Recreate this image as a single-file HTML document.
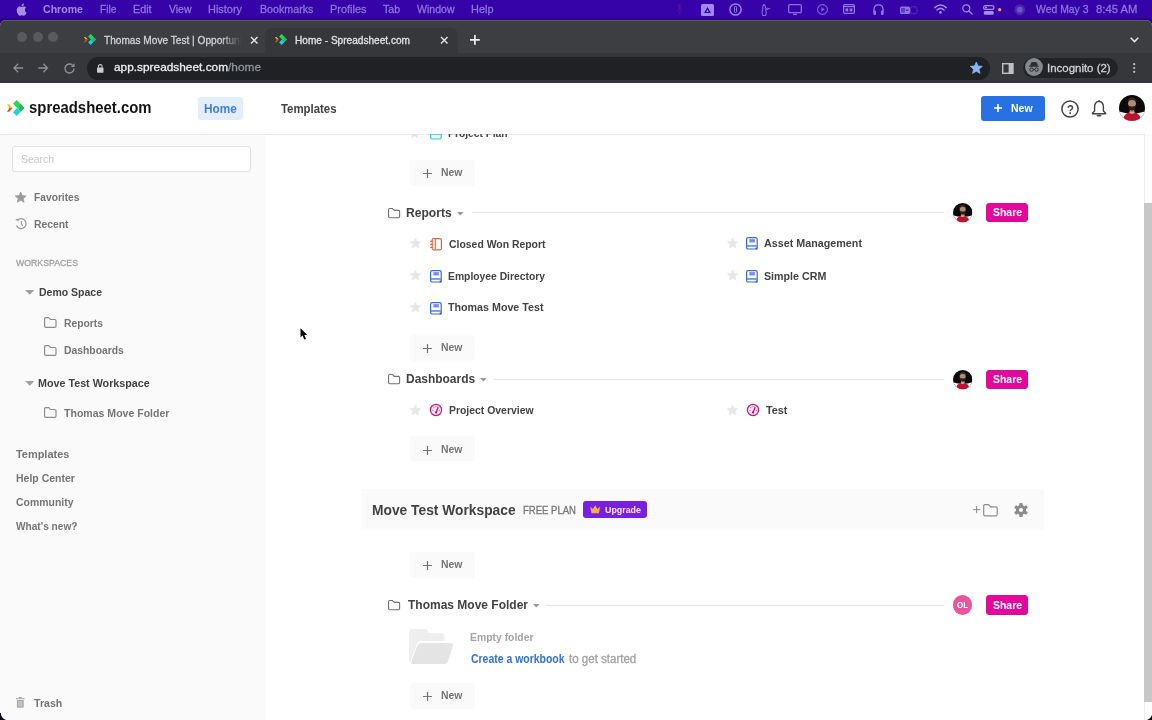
<!DOCTYPE html>
<html lang="en">
<head>
<meta charset="utf-8">
<title>Home - Spreadsheet.com</title>
<style>
*{box-sizing:border-box;margin:0;padding:0}
html,body{width:1152px;height:720px;overflow:hidden;background:#0b0b12}
body{position:relative;font-family:"Liberation Sans",sans-serif;-webkit-font-smoothing:antialiased}
.a{position:absolute}
.t{position:absolute;white-space:nowrap;line-height:20px;height:20px;transform-origin:0 50%}
svg{position:absolute;overflow:visible}
#menubar{left:0;top:0;width:1152px;height:30px;background:linear-gradient(#3503a8 0,#3503a8 17px,#2a0382 20px,#2a0382 100%)}
#win{left:0;top:20px;width:1152px;height:700px;border-radius:6px 6px 8px 8px;overflow:hidden;background:#fff}
#tabstrip{left:0;top:0;width:1152px;height:33px;background:#3c3e42;border-top:1px solid #57595d}
#toolbar{left:0;top:33px;width:1152px;height:30px;background:#36373b}
#acttab{left:265px;top:7.5px;width:193px;height:26.5px;background:#36373b;border-radius:7px 7px 0 0}
.tl{width:10px;height:10px;border-radius:50%;background:#585a5e;top:12.4px}
#omni{left:87px;top:37px;width:903px;height:22.8px;border-radius:11.4px;background:#202124}
#incog{left:1023px;top:38.5px;width:95px;height:19.5px;border-radius:10px;background:#222327}
#apphead{left:0;top:63px;width:1152px;height:52px;background:#fff;border-bottom:1px solid #e8e8e8}
#sidebar{left:0;top:114px;width:264px;height:586px;background:#fafafa;box-shadow:1px 0 3px rgba(0,0,0,.04)}
#search{left:12px;top:146.2px;width:239.3px;height:25.6px;background:#fff;border:1px solid #e0e0e0;border-radius:3px}
.newb{left:410px;width:65px;height:26.2px;background:#fafafa;border-radius:3px}
.line{height:1px;background:#e2e2e2}
.share{left:986.2px;width:41.6px;height:19.2px;background:#e3089b;border:1px solid #cf1290;border-radius:3px}
#banner{left:362px;top:489.2px;width:682px;height:39.4px;background:#fafafa}
#upg{left:583.2px;top:501.3px;width:63.8px;height:17.2px;background:#7721dd;border-radius:3px}
#sbtrack{left:1144px;top:134px;width:8px;height:586px;background:#fcfcfc;border-left:1px solid #ececec}
#sbthumb{left:1144.3px;top:202.5px;width:7.7px;height:499.2px;background:#c7c7c7}
</style>
</head>
<body>
<div id="menubar" class="a"></div>
<div id="win" class="a">
  <div id="tabstrip" class="a"></div>
  <div id="acttab" class="a"></div>
  <div id="toolbar" class="a"></div>
  <div class="a tl" style="left:16.5px"></div>
  <div class="a tl" style="left:32.5px"></div>
  <div class="a tl" style="left:48.3px"></div>
</div>
<div id="omni" class="a" style="top:56.8px"></div>
<div id="incog" class="a" style="top:57.7px;height:20px"></div>
<div id="apphead" class="a" style="top:82.5px"></div>
<div id="sidebar" class="a" style="top:134.5px"></div>
<div id="search" class="a"></div>
<div class="a" style="left:198px;top:96.5px;width:44.8px;height:23.5px;background:#e4edfb;border-radius:3px"></div>
<div class="a" style="left:980.6px;top:95.7px;width:64.8px;height:25px;background:#2871e3;border-radius:3px"></div>

<!-- main -->
<div class="a newb" style="top:159.7px"></div>
<div class="a newb" style="top:334.5px"></div>
<div class="a newb" style="top:436.2px"></div>
<div class="a newb" style="top:551.8px"></div>
<div class="a newb" style="top:683.2px"></div>
<div class="a line" style="left:472px;top:212.3px;width:472px"></div>
<div class="a line" style="left:493.7px;top:378.7px;width:450.3px"></div>
<div class="a line" style="left:546px;top:604.5px;width:398px"></div>
<div class="a share" style="top:203.1px"></div>
<div class="a share" style="top:369.6px"></div>
<div class="a share" style="top:595.4px"></div>
<div id="banner" class="a"></div>
<div id="upg" class="a"></div>
<div class="a" style="left:953.1px;top:595.4px;width:19.4px;height:19.4px;border-radius:50%;background:#e9559c"></div>
<div id="sbtrack" class="a"></div>
<div id="sbthumb" class="a"></div>

<svg style="left:16.0px;top:3.2px" width="11" height="13" viewBox="0 0 11 13" ><path d="M8.9,6.9c0-1.5,1.2-2.2,1.3-2.3c-0.7-1-1.8-1.2-2.2-1.2c-0.9-0.1-1.8,0.6-2.3,0.6c-0.5,0-1.2-0.5-2-0.5C2.700,3.500,1.700,4.100,1.200,5C0.100,6.900,0.900,9.700,2,11.200c0.500,0.800,1.100,1.600,1.900,1.600c0.800,0,1.100-0.500,2-0.500s1.200,0.500,2,0.500c0.800,0,1.400-0.800,1.900-1.500c0.600-0.900,0.800-1.700,0.900-1.800C10.600,9.500,8.900,8.800,8.900,6.900z M7.400,2.400C7.800,1.900,8.100,1.200,8,0.500C7.400,0.500,6.700,0.900,6.200,1.400C5.800,1.900,5.500,2.600,5.600,3.300C6.300,3.300,7,2.900,7.400,2.400z" fill="#a68ee6"/></svg>
<svg style="left:676.5px;top:4.0px" width="5" height="11" viewBox="0 0 5 11" ><rect x="1.2" y="0" width="2.6" height="6.5" rx="1.3" fill="#4c1296"/><path d="M0.3,5 Q0.3,8 2.5,8 Q4.7,8 4.700,5 M2.5,8 V10.5" stroke="#4c1296" stroke-width="0.9" fill="none"/></svg>
<svg style="left:700.6px;top:3.7px" width="13" height="12" viewBox="0 0 13 12" ><rect width="13" height="12" rx="1.5" fill="#a088ec"/><path d="M6.5,3 L10,9 H3 Z" fill="#3503a8"/><path d="M6.5,5.600 L7.800,8 H5.200 Z" fill="#a088ec"/></svg>
<svg style="left:728.7px;top:3.2px" width="13" height="13" viewBox="0 0 13 13" ><circle cx="6.5" cy="6.5" r="5.600" fill="none" stroke="#9a80e6" stroke-width="1.5"/><rect x="5.400" y="3.400" width="2.200" height="6.200" rx="1.100" fill="none" stroke="#9a80e6" stroke-width="1"/></svg>
<svg style="left:760.4px;top:3.5px" width="10" height="12" viewBox="0 0 10 12" ><path d="M4,0.500 Q6,1.500 5.200,4 L9,4.500 L5.500,6 Q7,9 5.500,11.500 L3,11.500 Q1,8 3,5 Q2,2.500 4,0.500 Z" fill="none" stroke="#8669dc" stroke-width="1.100"/></svg>
<svg style="left:788.0px;top:4.2px" width="14" height="11" viewBox="0 0 14 11" ><rect x="0.700" y="0.700" width="12.600" height="8" rx="1.200" fill="none" stroke="#8a6ee0" stroke-width="1.300"/><path d="M5,10.400 H9" stroke="#8a6ee0" stroke-width="1.300"/></svg>
<svg style="left:816.7px;top:4.2px" width="11" height="11" viewBox="0 0 11 11" ><circle cx="5.500" cy="5.500" r="4.900" fill="none" stroke="#7e62d8" stroke-width="1.100"/><path d="M4.300,3.300 L7.800,5.500 L4.300,7.700 Z" fill="#7e62d8"/></svg>
<svg style="left:843.0px;top:4.2px" width="12" height="10" viewBox="0 0 12 10" ><rect x="0.600" y="0.600" width="10.800" height="8.800" rx="1.200" fill="none" stroke="#9377e2" stroke-width="1.200"/><path d="M0.600,2.600 H11.400" stroke="#9377e2" stroke-width="1.200"/><rect x="2.400" y="4.400" width="2.800" height="3" fill="#9377e2"/><rect x="6.600" y="4.400" width="2.800" height="3" fill="#9377e2"/></svg>
<svg style="left:872.5px;top:4.0px" width="11" height="11.5" viewBox="0 0 11 11.5" ><path d="M1,8 V5.500 Q1,0.800 5.500,0.800 Q10,0.800 10,5.500 V8" fill="none" stroke="#9478e0" stroke-width="1.300"/><rect x="0.400" y="6.500" width="2.600" height="4.600" rx="1.100" fill="#9478e0"/><rect x="8" y="6.500" width="2.600" height="4.600" rx="1.100" fill="#9478e0"/></svg>
<svg style="left:900.4px;top:5.5px" width="18" height="8.5" viewBox="0 0 18 8.5" ><rect x="0" y="0.500" width="10" height="7.500" rx="1.500" fill="#9075dc"/><path d="M2,2 V6.500 M4,2 V6.500 M6,4.200 H8.500" stroke="#3503a8" stroke-width="1"/><rect x="10.500" y="0.800" width="6.500" height="7" rx="2" fill="none" stroke="#5a2fbf" stroke-width="1"/></svg>
<svg style="left:933.8px;top:4.2px" width="13" height="10" viewBox="0 0 13 10" ><path d="M0.800,3.600 Q6.500,-1.600 12.200,3.600" fill="none" stroke="#a58ee8" stroke-width="1.500" stroke-linecap="round"/><path d="M3,6 Q6.500,2.800 10,6" fill="none" stroke="#a58ee8" stroke-width="1.500" stroke-linecap="round"/><circle cx="6.500" cy="8.400" r="1.300" fill="#a58ee8"/></svg>
<svg style="left:962.0px;top:4.3px" width="10.5" height="10.5" viewBox="0 0 10.5 10.5" ><circle cx="4.300" cy="4.300" r="3.500" fill="none" stroke="#9d85e4" stroke-width="1.300"/><path d="M6.900,6.900 L10,10" stroke="#9d85e4" stroke-width="1.400" stroke-linecap="round"/></svg>
<svg style="left:983.0px;top:4.5px" width="11.5" height="10.5" viewBox="0 0 11.5 10.5" ><rect x="0.600" y="0.600" width="10.300" height="3.800" rx="1.900" fill="none" stroke="#a58ee8" stroke-width="1.200"/><circle cx="3" cy="2.500" r="1.100" fill="#a58ee8"/><rect x="0.600" y="6" width="10.300" height="3.800" rx="1.900" fill="#a58ee8"/></svg>
<svg style="left:998.3px;top:8.2px" width="3.4" height="3.4" viewBox="0 0 3.4 3.4" ><circle cx="1.700" cy="1.700" r="1.600" fill="#f2a14a"/></svg>
<svg style="left:1013.5px;top:4.0px" width="11.5" height="11.5" viewBox="0 0 11.5 11.5" ><circle cx="5.750" cy="5.750" r="5.400" fill="#4a27a8"/><circle cx="5.750" cy="5.750" r="3" fill="#6a58c0"/></svg>
<svg style="left:84.0px;top:34.4px" width="12.07" height="11.04" viewBox="0 0 17.5 16" ><polygon points="0,4.3 2.2,4.3 5.5,8 2.4,8" fill="#f4c21c"/><polygon points="2.4,8 5.5,8 2.2,11.8 0,11.8" fill="#c45a1c"/><polygon points="9.7,0 17.5,7.9 13.7,11.7 6,3.8" fill="#2bd752"/><polygon points="13.7,4.1 17.5,7.9 13.7,11.7 11.8,9.8 13.7,7.9 11.8,6" fill="#1cba5c"/><polygon points="9.9,8.1 13.7,11.7 9.7,16 6,12.2" fill="#22cfe0"/></svg>
<svg style="left:275.2px;top:34.4px" width="12.07" height="11.04" viewBox="0 0 17.5 16" ><polygon points="0,4.3 2.2,4.3 5.5,8 2.4,8" fill="#f4c21c"/><polygon points="2.4,8 5.5,8 2.2,11.8 0,11.8" fill="#c45a1c"/><polygon points="9.7,0 17.5,7.9 13.7,11.7 6,3.8" fill="#2bd752"/><polygon points="13.7,4.1 17.5,7.9 13.7,11.7 11.8,9.8 13.7,7.9 11.8,6" fill="#1cba5c"/><polygon points="9.9,8.1 13.7,11.7 9.7,16 6,12.2" fill="#22cfe0"/></svg>
<svg style="left:250.9px;top:36.8px" width="6.5" height="6.5" viewBox="0 0 6.5 6.5" ><path d="M0,0 L6.5,6.5 M6.5,0 L0,6.5" stroke="#e4e6e9" stroke-width="1.4" fill="none"/></svg>
<svg style="left:441.4px;top:36.8px" width="6.5" height="6.5" viewBox="0 0 6.5 6.5" ><path d="M0,0 L6.5,6.5 M6.5,0 L0,6.5" stroke="#e4e6e9" stroke-width="1.4" fill="none"/></svg>
<svg style="left:470.2px;top:35.1px" width="9.8" height="9.8" viewBox="0 0 9.8 9.8" ><path d="M4.9,0 V9.8 M0,4.9 H9.8" stroke="#f0f1f3" stroke-width="1.7" fill="none"/></svg>
<svg style="left:1130.3px;top:37.3px" width="9" height="6" viewBox="0 0 9 6" ><path d="M0.700,0.800 L4.500,4.600 L8.300,0.800" fill="none" stroke="#e8eaed" stroke-width="1.500"/></svg>
<svg style="left:12.5px;top:63.0px" width="10.5" height="10" viewBox="0 0 10.5 10" ><path d="M10.200,5 H1.200 M5.200,0.800 L1,5 L5.200,9.200" fill="none" stroke="#8e9196" stroke-width="1.300"/></svg>
<svg style="left:38.0px;top:63.0px" width="10.5" height="10" viewBox="0 0 10.5 10" ><path d="M0.300,5 H9.300 M5.300,0.800 L9.500,5 L5.300,9.200" fill="none" stroke="#8e9196" stroke-width="1.300"/></svg>
<svg style="left:63.7px;top:62.7px" width="11" height="11" viewBox="0 0 11 11" ><path d="M10,5.500 A4.500,4.500 0 1 1 8.500,2.100" fill="none" stroke="#8e9196" stroke-width="1.400"/><path d="M10.600,0.200 V4 H6.800 Z" fill="#8e9196"/></svg>
<svg style="left:97.3px;top:63.8px" width="6.5" height="9" viewBox="0 0 6.5 9" ><rect x="0" y="3.600" width="6.500" height="5.200" rx="0.800" fill="#c9cbcf"/><path d="M1.400,3.800 V2.400 Q1.400,0.600 3.250,0.600 Q5.100,0.600 5.100,2.400 V3.800" fill="none" stroke="#c9cbcf" stroke-width="1.100"/></svg>
<svg style="left:969.7px;top:62.2px" width="12.6" height="12.6" viewBox="0 0 12.6 12.6" ><polygon points="6.30,0.00 7.97,4.01 12.29,4.35 9.00,7.18 10.00,11.40 6.30,9.13 2.60,11.40 3.60,7.18 0.31,4.35 4.63,4.01" fill="#8ab4f8" stroke="#8ab4f8" stroke-width="0.8" stroke-linejoin="round"/></svg>
<svg style="left:1002.0px;top:62.7px" width="11.7" height="11" viewBox="0 0 11.7 11" ><rect x="0.700" y="0.700" width="10.300" height="9.600" fill="none" stroke="#bdc0c4" stroke-width="1.400"/><rect x="6.600" y="0.700" width="4.400" height="9.600" fill="#bdc0c4"/></svg>
<svg style="left:1024.8px;top:58.3px" width="18" height="18" viewBox="0 0 18 18" ><circle cx="9" cy="9" r="8.900" fill="#85888d"/><path d="M4,8.200 H14 M5.600,7.800 L6.600,4.600 H11.400 L12.400,7.800 Z" fill="#2a2b2f" stroke="#2a2b2f" stroke-width="0.900"/><circle cx="6.500" cy="11.600" r="1.700" fill="none" stroke="#2a2b2f" stroke-width="1"/><circle cx="11.500" cy="11.600" r="1.700" fill="none" stroke="#2a2b2f" stroke-width="1"/><path d="M8.200,11.400 H9.800" stroke="#2a2b2f" stroke-width="0.900"/></svg>
<svg style="left:1133.2px;top:63.0px" width="2.4" height="10" viewBox="0 0 2.4 10" ><circle cx="1.200" cy="1.200" r="1.100" fill="#c3c5c9"/><circle cx="1.200" cy="5" r="1.100" fill="#c3c5c9"/><circle cx="1.200" cy="8.800" r="1.100" fill="#c3c5c9"/></svg>
<svg style="left:6.9px;top:100.2px" width="17.50" height="16.00" viewBox="0 0 17.5 16" ><polygon points="0,4.3 2.2,4.3 5.5,8 2.4,8" fill="#f4c21c"/><polygon points="2.4,8 5.5,8 2.2,11.8 0,11.8" fill="#c45a1c"/><polygon points="9.7,0 17.5,7.9 13.7,11.7 6,3.8" fill="#2bd752"/><polygon points="13.7,4.1 17.5,7.9 13.7,11.7 11.8,9.8 13.7,7.9 11.8,6" fill="#1cba5c"/><polygon points="9.9,8.1 13.7,11.7 9.7,16 6,12.2" fill="#22cfe0"/></svg>
<svg style="left:994.0px;top:104.2px" width="8" height="8" viewBox="0 0 8 8" ><path d="M4.0,0 V8 M0,4.0 H8" stroke="#fff" stroke-width="1.6" fill="none"/></svg>
<svg style="left:1061.3px;top:100.0px" width="18" height="18" viewBox="0 0 18 18" ><circle cx="9" cy="9" r="8.100" fill="none" stroke="#444" stroke-width="1.500"/></svg>
<svg style="left:1091.0px;top:100.3px" width="16" height="17.5" viewBox="0 0 16 17.5" ><path d="M8,1.200 Q3.600,1.800 3.600,6.800 V11 L1.400,13.300 V13.800 H14.600 V13.300 L12.400,11 V6.800 Q12.400,1.800 8,1.200 Z" fill="none" stroke="#444" stroke-width="1.400" stroke-linejoin="round"/><path d="M6.400,15.600 H9.600" stroke="#444" stroke-width="1.600" stroke-linecap="round"/><circle cx="8" cy="1.100" r="0.900" fill="#444"/></svg>
<svg style="left:1119.0px;top:95.4px" width="26" height="26" viewBox="0 0 26 26" ><clipPath id="c11428"><circle cx="13" cy="13" r="13"/></clipPath><g clip-path="url(#c11428)"><rect width="26" height="26" fill="#0c0909"/><path d="M0,16.5 Q6,18.6 13,18.6 Q20,18.6 26,16.5 V26 H0 Z" fill="#fff"/><path d="M4,26 Q4.300,19.300 9.500,17.400 Q13,19.600 16.500,17.400 Q21.700,19.300 22,26 Z" fill="#bd1230"/><rect x="10.700" y="12.500" width="4.600" height="5.800" fill="#8f6f5e"/><path d="M10.200,17.500 Q13,20.200 15.800,17.500 L15.200,16.400 H10.800 Z" fill="#dfa99b"/><ellipse cx="13" cy="8.600" rx="4" ry="5.200" fill="#b08b76"/><path d="M8.900,7.300 Q8.800,2.600 13,2.600 Q17.200,2.600 17.100,7.300 Q15.800,5 13,5 Q10.200,5 8.900,7.300 Z" fill="#3a2920"/><path d="M9,9.800 Q9.400,15.200 13,15.400 Q16.600,15.200 17,9.800 Q15.800,11.800 13,11.400 Q10.200,11.800 9,9.800 Z" fill="#2b1d18"/></g></svg>
<svg style="left:15.0px;top:191.9px" width="11.4" height="11.4" viewBox="0 0 11.4 11.4" ><polygon points="5.70,0.00 7.21,3.62 11.12,3.94 8.14,6.49 9.05,10.31 5.70,8.27 2.35,10.31 3.26,6.49 0.28,3.94 4.19,3.62" fill="#9b9b9b" stroke="#9b9b9b" stroke-width="0.8" stroke-linejoin="round"/></svg>
<svg style="left:14.6px;top:218.4px" width="12" height="11.5" viewBox="0 0 12 11.5" ><path d="M2.300,2.300 A5,5 0 1 1 1.500,7.500" fill="none" stroke="#9b9b9b" stroke-width="1.250"/><path d="M0.300,0.900 H3.300 V3.900 Z" fill="#9b9b9b" transform="rotate(-8 2 2)"/><path d="M6.400,3 V6 L8,8" fill="none" stroke="#9b9b9b" stroke-width="1.100"/></svg>
<svg style="left:24.7px;top:290.2px" width="9.4" height="4.7" viewBox="0 0 9.4 4.7" ><polygon points="0,0 9.4,0 4.7,4.7" fill="#a0a0a0"/></svg>
<svg style="left:24.7px;top:381.0px" width="9.4" height="4.7" viewBox="0 0 9.4 4.7" ><polygon points="0,0 9.4,0 4.7,4.7" fill="#a0a0a0"/></svg>
<svg style="left:43.6px;top:317.2px" width="12.6" height="10.9" viewBox="0 0 13 11" preserveAspectRatio="none"><path d="M1.8,0.6 H4.9 L6.6,2.5 H11.1 Q12.4,2.5 12.4,3.8 V9.1 Q12.4,10.4 11.1,10.4 H1.9 Q0.6,10.4 0.6,9.1 V1.8 Q0.6,0.6 1.8,0.6 Z" fill="none" stroke="#8c8c8c" stroke-width="1.2" stroke-linejoin="round"/></svg>
<svg style="left:43.6px;top:344.5px" width="12.6" height="10.9" viewBox="0 0 13 11" preserveAspectRatio="none"><path d="M1.8,0.6 H4.9 L6.6,2.5 H11.1 Q12.4,2.5 12.4,3.8 V9.1 Q12.4,10.4 11.1,10.4 H1.9 Q0.6,10.4 0.6,9.1 V1.8 Q0.6,0.6 1.8,0.6 Z" fill="none" stroke="#8c8c8c" stroke-width="1.2" stroke-linejoin="round"/></svg>
<svg style="left:43.6px;top:407.3px" width="12.6" height="10.9" viewBox="0 0 13 11" preserveAspectRatio="none"><path d="M1.8,0.6 H4.9 L6.6,2.5 H11.1 Q12.4,2.5 12.4,3.8 V9.1 Q12.4,10.4 11.1,10.4 H1.9 Q0.6,10.4 0.6,9.1 V1.8 Q0.6,0.6 1.8,0.6 Z" fill="none" stroke="#8c8c8c" stroke-width="1.2" stroke-linejoin="round"/></svg>
<svg style="left:16.0px;top:697.0px" width="8.6" height="11" viewBox="0 0 8.6 11" ><path d="M0,1.800 H8.600 M2.800,0.500 H5.800" stroke="#a2a2a2" stroke-width="1.100"/><path d="M0.900,3 H7.700 V10 Q7.700,10.800 6.900,10.800 H1.700 Q0.900,10.800 0.900,10 Z" fill="#a9a9a9"/><path d="M2.900,4.200 V9.600 M4.300,4.200 V9.600 M5.700,4.200 V9.600" stroke="#e4e4e4" stroke-width="0.600"/></svg>
<svg style="left:422.7px;top:168.9px" width="9" height="9" viewBox="0 0 9 9" ><path d="M4.5,0 V9 M0,4.5 H9" stroke="#757575" stroke-width="1.2" fill="none"/></svg>
<svg style="left:422.7px;top:343.5px" width="9" height="9" viewBox="0 0 9 9" ><path d="M4.5,0 V9 M0,4.5 H9" stroke="#757575" stroke-width="1.2" fill="none"/></svg>
<svg style="left:422.7px;top:445.8px" width="9" height="9" viewBox="0 0 9 9" ><path d="M4.5,0 V9 M0,4.5 H9" stroke="#757575" stroke-width="1.2" fill="none"/></svg>
<svg style="left:422.7px;top:561.2px" width="9" height="9" viewBox="0 0 9 9" ><path d="M4.5,0 V9 M0,4.5 H9" stroke="#757575" stroke-width="1.2" fill="none"/></svg>
<svg style="left:422.7px;top:692.3px" width="9" height="9" viewBox="0 0 9 9" ><path d="M4.5,0 V9 M0,4.5 H9" stroke="#757575" stroke-width="1.2" fill="none"/></svg>
<svg style="left:409.5px;top:238.2px" width="11.0" height="11.0" viewBox="0 0 11.0 11.0" ><polygon points="5.50,0.00 6.95,3.50 10.73,3.80 7.85,6.26 8.73,9.95 5.50,7.97 2.27,9.95 3.15,6.26 0.27,3.80 4.05,3.50" fill="#e6e6e6" stroke="#e6e6e6" stroke-width="0.8" stroke-linejoin="round"/></svg>
<svg style="left:409.5px;top:270.3px" width="11.0" height="11.0" viewBox="0 0 11.0 11.0" ><polygon points="5.50,0.00 6.95,3.50 10.73,3.80 7.85,6.26 8.73,9.95 5.50,7.97 2.27,9.95 3.15,6.26 0.27,3.80 4.05,3.50" fill="#e6e6e6" stroke="#e6e6e6" stroke-width="0.8" stroke-linejoin="round"/></svg>
<svg style="left:409.5px;top:302.1px" width="11.0" height="11.0" viewBox="0 0 11.0 11.0" ><polygon points="5.50,0.00 6.95,3.50 10.73,3.80 7.85,6.26 8.73,9.95 5.50,7.97 2.27,9.95 3.15,6.26 0.27,3.80 4.05,3.50" fill="#e6e6e6" stroke="#e6e6e6" stroke-width="0.8" stroke-linejoin="round"/></svg>
<svg style="left:409.5px;top:404.6px" width="11.0" height="11.0" viewBox="0 0 11.0 11.0" ><polygon points="5.50,0.00 6.95,3.50 10.73,3.80 7.85,6.26 8.73,9.95 5.50,7.97 2.27,9.95 3.15,6.26 0.27,3.80 4.05,3.50" fill="#e6e6e6" stroke="#e6e6e6" stroke-width="0.8" stroke-linejoin="round"/></svg>
<svg style="left:726.5px;top:238.1px" width="11.0" height="11.0" viewBox="0 0 11.0 11.0" ><polygon points="5.50,0.00 6.95,3.50 10.73,3.80 7.85,6.26 8.73,9.95 5.50,7.97 2.27,9.95 3.15,6.26 0.27,3.80 4.05,3.50" fill="#e6e6e6" stroke="#e6e6e6" stroke-width="0.8" stroke-linejoin="round"/></svg>
<svg style="left:726.5px;top:270.3px" width="11.0" height="11.0" viewBox="0 0 11.0 11.0" ><polygon points="5.50,0.00 6.95,3.50 10.73,3.80 7.85,6.26 8.73,9.95 5.50,7.97 2.27,9.95 3.15,6.26 0.27,3.80 4.05,3.50" fill="#e6e6e6" stroke="#e6e6e6" stroke-width="0.8" stroke-linejoin="round"/></svg>
<svg style="left:726.5px;top:404.6px" width="11.0" height="11.0" viewBox="0 0 11.0 11.0" ><polygon points="5.50,0.00 6.95,3.50 10.73,3.80 7.85,6.26 8.73,9.95 5.50,7.97 2.27,9.95 3.15,6.26 0.27,3.80 4.05,3.50" fill="#e6e6e6" stroke="#e6e6e6" stroke-width="0.8" stroke-linejoin="round"/></svg>
<svg style="left:429.8px;top:237.7px" width="12" height="12.4" viewBox="0 0 12 12.4" ><rect x="2.2" y="0.6" width="9.2" height="11.2" rx="1.5" fill="#fff" stroke="#c96a44" stroke-width="1.2"/><rect x="2.8" y="1.2" width="2.4" height="10" fill="#fbd5c2"/><path d="M5.5,1 V11.4" stroke="#ee7f5c" stroke-width="1.3"/><path d="M0,3.2 H2.8 M0,6.2 H2.8 M0,9.2 H2.8" stroke="#b0643f" stroke-width="1.1"/></svg>
<svg style="left:429.7px;top:269.7px" width="12" height="13" viewBox="0 0 12 13" ><rect x="0.6" y="0.6" width="10.6" height="11.4" rx="1.6" fill="#fff" stroke="#356bd0" stroke-width="1.2"/><rect x="3.3" y="2.1" width="5.6" height="3.4" fill="#7a8df0"/><rect x="0.9" y="8.2" width="10" height="1.5" fill="#4c86e6"/><rect x="9.6" y="10.6" width="1.8" height="1.8" fill="#2f58b0"/></svg>
<svg style="left:429.7px;top:301.5px" width="12" height="13" viewBox="0 0 12 13" ><rect x="0.6" y="0.6" width="10.6" height="11.4" rx="1.6" fill="#fff" stroke="#356bd0" stroke-width="1.2"/><rect x="3.3" y="2.1" width="5.6" height="3.4" fill="#7a8df0"/><rect x="0.9" y="8.2" width="10" height="1.5" fill="#4c86e6"/><rect x="9.6" y="10.6" width="1.8" height="1.8" fill="#2f58b0"/></svg>
<svg style="left:746.3px;top:237.4px" width="12" height="13" viewBox="0 0 12 13" ><rect x="0.6" y="0.6" width="10.6" height="11.4" rx="1.6" fill="#fff" stroke="#356bd0" stroke-width="1.2"/><rect x="3.3" y="2.1" width="5.6" height="3.4" fill="#7a8df0"/><rect x="0.9" y="8.2" width="10" height="1.5" fill="#4c86e6"/><rect x="9.6" y="10.6" width="1.8" height="1.8" fill="#2f58b0"/></svg>
<svg style="left:746.3px;top:269.7px" width="12" height="13" viewBox="0 0 12 13" ><rect x="0.6" y="0.6" width="10.6" height="11.4" rx="1.6" fill="#fff" stroke="#356bd0" stroke-width="1.2"/><rect x="3.3" y="2.1" width="5.6" height="3.4" fill="#7a8df0"/><rect x="0.9" y="8.2" width="10" height="1.5" fill="#4c86e6"/><rect x="9.6" y="10.6" width="1.8" height="1.8" fill="#2f58b0"/></svg>
<svg style="left:428.9px;top:403.2px" width="14" height="14" viewBox="0 0 14 14" ><circle cx="7" cy="7" r="5.6" fill="#fde3f2" stroke="#c4167a" stroke-width="1.2"/><path d="M7.2,9.6 L9,4.2" stroke="#b0105f" stroke-width="1.2" stroke-linecap="round"/><circle cx="7.1" cy="9.4" r="1.1" fill="#b0105f"/><circle cx="3.9" cy="7.3" r="0.55" fill="#c4167a"/><circle cx="4.9" cy="4.7" r="0.55" fill="#c4167a"/><circle cx="7" cy="3.6" r="0.5" fill="#c4167a"/><circle cx="10.2" cy="7.3" r="0.55" fill="#c4167a"/></svg>
<svg style="left:745.6px;top:403.2px" width="14" height="14" viewBox="0 0 14 14" ><circle cx="7" cy="7" r="5.6" fill="#fde3f2" stroke="#c4167a" stroke-width="1.2"/><path d="M7.2,9.6 L9,4.2" stroke="#b0105f" stroke-width="1.2" stroke-linecap="round"/><circle cx="7.1" cy="9.4" r="1.1" fill="#b0105f"/><circle cx="3.9" cy="7.3" r="0.55" fill="#c4167a"/><circle cx="4.9" cy="4.7" r="0.55" fill="#c4167a"/><circle cx="7" cy="3.6" r="0.5" fill="#c4167a"/><circle cx="10.2" cy="7.3" r="0.55" fill="#c4167a"/></svg>
<svg style="left:388.0px;top:207.9px" width="12.2" height="10.4" viewBox="0 0 13 11" preserveAspectRatio="none"><path d="M1.8,0.6 H4.9 L6.6,2.5 H11.1 Q12.4,2.5 12.4,3.8 V9.1 Q12.4,10.4 11.1,10.4 H1.9 Q0.6,10.4 0.6,9.1 V1.8 Q0.6,0.6 1.8,0.6 Z" fill="none" stroke="#6f6f6f" stroke-width="1.15" stroke-linejoin="round"/></svg>
<svg style="left:388.0px;top:374.1px" width="12.2" height="10.4" viewBox="0 0 13 11" preserveAspectRatio="none"><path d="M1.8,0.6 H4.9 L6.6,2.5 H11.1 Q12.4,2.5 12.4,3.8 V9.1 Q12.4,10.4 11.1,10.4 H1.9 Q0.6,10.4 0.6,9.1 V1.8 Q0.6,0.6 1.8,0.6 Z" fill="none" stroke="#6f6f6f" stroke-width="1.15" stroke-linejoin="round"/></svg>
<svg style="left:388.0px;top:599.9px" width="12.2" height="10.4" viewBox="0 0 13 11" preserveAspectRatio="none"><path d="M1.8,0.6 H4.9 L6.6,2.5 H11.1 Q12.4,2.5 12.4,3.8 V9.1 Q12.4,10.4 11.1,10.4 H1.9 Q0.6,10.4 0.6,9.1 V1.8 Q0.6,0.6 1.8,0.6 Z" fill="none" stroke="#6f6f6f" stroke-width="1.15" stroke-linejoin="round"/></svg>
<svg style="left:456.6px;top:211.9px" width="6.6" height="3.5" viewBox="0 0 6.6 3.5" ><polygon points="0,0 6.6,0 3.3,3.5" fill="#9a9a9a"/></svg>
<svg style="left:480.0px;top:378.2px" width="6.6" height="3.5" viewBox="0 0 6.6 3.5" ><polygon points="0,0 6.6,0 3.3,3.5" fill="#9a9a9a"/></svg>
<svg style="left:532.7px;top:604.0px" width="6.6" height="3.5" viewBox="0 0 6.6 3.5" ><polygon points="0,0 6.6,0 3.3,3.5" fill="#9a9a9a"/></svg>
<svg style="left:953.1px;top:203.0px" width="19.4" height="19.4" viewBox="0 0 26 26" ><clipPath id="c9840"><circle cx="13" cy="13" r="13"/></clipPath><g clip-path="url(#c9840)"><rect width="26" height="26" fill="#0c0909"/><path d="M0,16.5 Q6,18.6 13,18.6 Q20,18.6 26,16.5 V26 H0 Z" fill="#fff"/><path d="M4,26 Q4.300,19.300 9.500,17.400 Q13,19.600 16.500,17.400 Q21.700,19.300 22,26 Z" fill="#bd1230"/><rect x="10.700" y="12.500" width="4.600" height="5.800" fill="#8f6f5e"/><path d="M10.200,17.500 Q13,20.200 15.800,17.500 L15.200,16.400 H10.800 Z" fill="#dfa99b"/><ellipse cx="13" cy="8.600" rx="4" ry="5.200" fill="#b08b76"/><path d="M8.900,7.300 Q8.800,2.600 13,2.600 Q17.200,2.600 17.100,7.300 Q15.800,5 13,5 Q10.200,5 8.900,7.300 Z" fill="#3a2920"/><path d="M9,9.800 Q9.400,15.200 13,15.400 Q16.600,15.200 17,9.800 Q15.800,11.800 13,11.400 Q10.200,11.800 9,9.800 Z" fill="#2b1d18"/></g></svg>
<svg style="left:953.1px;top:369.5px" width="19.4" height="19.4" viewBox="0 0 26 26" ><clipPath id="c10007"><circle cx="13" cy="13" r="13"/></clipPath><g clip-path="url(#c10007)"><rect width="26" height="26" fill="#0c0909"/><path d="M0,16.5 Q6,18.6 13,18.6 Q20,18.6 26,16.5 V26 H0 Z" fill="#fff"/><path d="M4,26 Q4.300,19.300 9.500,17.400 Q13,19.600 16.500,17.400 Q21.700,19.300 22,26 Z" fill="#bd1230"/><rect x="10.700" y="12.500" width="4.600" height="5.800" fill="#8f6f5e"/><path d="M10.200,17.500 Q13,20.200 15.800,17.500 L15.200,16.400 H10.800 Z" fill="#dfa99b"/><ellipse cx="13" cy="8.600" rx="4" ry="5.200" fill="#b08b76"/><path d="M8.900,7.300 Q8.800,2.600 13,2.600 Q17.200,2.600 17.100,7.300 Q15.800,5 13,5 Q10.200,5 8.900,7.300 Z" fill="#3a2920"/><path d="M9,9.800 Q9.400,15.200 13,15.400 Q16.600,15.200 17,9.800 Q15.800,11.800 13,11.400 Q10.200,11.800 9,9.800 Z" fill="#2b1d18"/></g></svg>
<svg style="left:590.2px;top:505.1px" width="10.4" height="8.4" viewBox="0 0 10.4 8.4" ><path d="M0.200,1.600 L2.900,4 L5.200,0.300 L7.500,4 L10.200,1.600 L8.900,8.200 H1.500 Z" fill="#f1b13f"/></svg>
<svg style="left:973.1px;top:506.3px" width="7.2" height="7.2" viewBox="0 0 7.2 7.2" ><path d="M3.6,0 V7.2 M0,3.6 H7.2" stroke="#8d8d8d" stroke-width="1" fill="none"/></svg>
<svg style="left:983.1px;top:503.6px" width="14.9" height="12.5" viewBox="0 0 13 11" preserveAspectRatio="none"><path d="M1.8,0.6 H4.9 L6.6,2.5 H11.1 Q12.4,2.5 12.4,3.8 V9.1 Q12.4,10.4 11.1,10.4 H1.9 Q0.6,10.4 0.6,9.1 V1.8 Q0.6,0.6 1.8,0.6 Z" fill="none" stroke="#8d8d8d" stroke-width="1.05" stroke-linejoin="round"/></svg>
<svg style="left:1013.9px;top:502.8px" width="14" height="14" viewBox="0 0 14 14" ><g transform="translate(7,7)" fill="#8b8b8b"><rect x="-1.700" y="-7" width="3.400" height="3.400" rx="0.700" transform="rotate(0)"/><rect x="-1.700" y="-7" width="3.400" height="3.400" rx="0.700" transform="rotate(60)"/><rect x="-1.700" y="-7" width="3.400" height="3.400" rx="0.700" transform="rotate(120)"/><rect x="-1.700" y="-7" width="3.400" height="3.400" rx="0.700" transform="rotate(180)"/><rect x="-1.700" y="-7" width="3.400" height="3.400" rx="0.700" transform="rotate(240)"/><rect x="-1.700" y="-7" width="3.400" height="3.400" rx="0.700" transform="rotate(300)"/><circle r="5.100"/></g><circle cx="7" cy="7" r="2.050" fill="#fafafa"/></svg>
<svg style="left:408.7px;top:628.7px" width="44.5" height="35" viewBox="0 0 44.5 35" ><path d="M3,0 H15.500 Q17.500,0 18.500,1.600 L20,4 H32.500 Q35.500,4 35.500,7 V12 H12 Q9,12 8,14.800 L1,33.500 Q0,32.800 0,31.500 V3 Q0,0 3,0 Z" fill="#eeeeee"/><path d="M12.500,14 H42 Q44.500,14 43.800,16.400 L39,32.600 Q38.300,35 35.800,35 H3.200 Q1.400,35 2.100,33 L8.500,16.400 Q9.400,14 12.500,14 Z" fill="#e4e4e4"/></svg>
<svg style="left:299.6px;top:327.9px" width="9" height="13" viewBox="0 0 9 13" ><path d="M0.500,0.300 L0.500,9.300 L2.600,7.500 L4.300,11.600 L6,10.900 L4.300,6.900 L7.100,6.800 Z" fill="#000"/></svg>
<div class="a" style="left:0;top:712.5px;width:7.5px;height:7.5px;background:radial-gradient(circle at 100% 0,rgba(11,11,18,0) 6.8px,#0b0b12 7.5px)"></div>
<div class="a" style="left:1144.5px;top:712.5px;width:7.5px;height:7.5px;background:radial-gradient(circle at 0 0,rgba(11,11,18,0) 6.8px,#0b0b12 7.5px)"></div>
<span class="t" style="left:42.54px;top:-0.80px;font-size:11.3px;font-weight:700;color:#a28ae4;transform:scaleX(0.9370);;">Chrome</span>
<span class="t" style="left:99.50px;top:-0.80px;font-size:11.3px;font-weight:400;color:#8f76dc;transform:scaleX(0.9080);-webkit-text-stroke:0.3px;">File</span>
<span class="t" style="left:133.00px;top:-0.80px;font-size:11.3px;font-weight:400;color:#8f76dc;transform:scaleX(0.9516);-webkit-text-stroke:0.3px;">Edit</span>
<span class="t" style="left:168.50px;top:-0.80px;font-size:11.3px;font-weight:400;color:#8f76dc;transform:scaleX(0.9269);-webkit-text-stroke:0.3px;">View</span>
<span class="t" style="left:208.00px;top:-0.80px;font-size:11.3px;font-weight:400;color:#8f76dc;transform:scaleX(0.9671);-webkit-text-stroke:0.3px;">History</span>
<span class="t" style="left:259.96px;top:-0.80px;font-size:11.3px;font-weight:400;color:#8f76dc;transform:scaleX(0.9452);-webkit-text-stroke:0.3px;">Bookmarks</span>
<span class="t" style="left:329.50px;top:-0.80px;font-size:11.3px;font-weight:400;color:#8f76dc;transform:scaleX(0.9692);-webkit-text-stroke:0.3px;">Profiles</span>
<span class="t" style="left:383.00px;top:-0.80px;font-size:11.3px;font-weight:400;color:#8f76dc;transform:scaleX(0.9331);-webkit-text-stroke:0.3px;">Tab</span>
<span class="t" style="left:416.54px;top:-0.80px;font-size:11.3px;font-weight:400;color:#8f76dc;transform:scaleX(0.9344);-webkit-text-stroke:0.3px;">Window</span>
<span class="t" style="left:471.00px;top:-0.80px;font-size:11.3px;font-weight:400;color:#8f76dc;transform:scaleX(0.9674);-webkit-text-stroke:0.3px;">Help</span>
<span class="t" style="left:1036.08px;top:-0.80px;font-size:11.3px;font-weight:400;color:#8f76dc;transform:scaleX(0.9222);-webkit-text-stroke:0.3px;">Wed May 3</span>
<span class="t" style="left:1095.50px;top:-0.80px;font-size:11.3px;font-weight:400;color:#8f76dc;transform:scaleX(0.9985);-webkit-text-stroke:0.3px;">8:45 AM</span>
<span class="t" style="left:104.00px;top:29.70px;font-size:10.6px;font-weight:400;color:#d0d2d6;transform:scaleX(0.9552);-webkit-mask-image:linear-gradient(90deg,#000 85%,transparent 100%);mask-image:linear-gradient(90deg,#000 85%,transparent 100%);-webkit-text-stroke:0.3px;">Thomas Move Test | Opportuni</span>
<span class="t" style="left:295.00px;top:29.70px;font-size:10.6px;font-weight:400;color:#e0e2e5;transform:scaleX(0.9526);-webkit-text-stroke:0.3px;">Home - Spreadsheet.com</span>
<span class="t" style="left:113.54px;top:56.70px;font-size:11.8px;font-weight:400;color:#eceef0;transform:scaleX(1.0051);-webkit-text-stroke:0.3px;">app.spreadsheet.com<span style="color:#92969b">/home</span></span>
<span class="t" style="left:1047.36px;top:57.80px;font-size:11.2px;font-weight:400;color:#d0d2d6;transform:scaleX(1.0238);-webkit-text-stroke:0.3px;">Incognito (2)</span>
<span class="t" style="left:28.74px;top:97.70px;font-size:16.6px;font-weight:700;color:#141414;transform:scaleX(0.8978);;">spreadsheet.com</span>
<span class="t" style="left:203.74px;top:99.00px;font-size:12px;font-weight:700;color:#3d7fdc;transform:scaleX(0.9835);;">Home</span>
<span class="t" style="left:281.46px;top:99.00px;font-size:12px;font-weight:700;color:#424242;transform:scaleX(0.9500);;">Templates</span>
<span class="t" style="left:1010.96px;top:98.00px;font-size:10.8px;font-weight:700;color:#fff;transform:scaleX(0.9709);;">New</span>
<span class="t" style="left:1067.04px;top:100.20px;font-size:12.5px;font-weight:700;color:#444;transform:scaleX(0.9015);;">?</span>
<span class="t" style="left:20.74px;top:149.00px;font-size:10.8px;font-weight:400;color:#c6c6c6;transform:scaleX(0.9686);;">Search</span>
<span class="t" style="left:34.00px;top:187.20px;font-size:11.8px;font-weight:700;color:#757575;transform:scaleX(0.8676);;">Favorites</span>
<span class="t" style="left:34.00px;top:214.30px;font-size:11.8px;font-weight:700;color:#757575;transform:scaleX(0.8772);;">Recent</span>
<span class="t" style="left:16.04px;top:252.80px;font-size:9.4px;font-weight:400;color:#a2a2a2;transform:scaleX(0.9321);-webkit-text-stroke:0.3px;">WORKSPACES</span>
<span class="t" style="left:39.04px;top:281.60px;font-size:11.8px;font-weight:700;color:#424242;transform:scaleX(0.8892);;">Demo Space</span>
<span class="t" style="left:63.50px;top:313.00px;font-size:11.8px;font-weight:700;color:#757575;transform:scaleX(0.8749);;">Reports</span>
<span class="t" style="left:63.50px;top:340.20px;font-size:11.8px;font-weight:700;color:#757575;transform:scaleX(0.8777);;">Dashboards</span>
<span class="t" style="left:38.24px;top:373.00px;font-size:11.8px;font-weight:700;color:#424242;transform:scaleX(0.9100);;">Move Test Workspace</span>
<span class="t" style="left:63.54px;top:403.10px;font-size:11.8px;font-weight:700;color:#757575;transform:scaleX(0.8938);;">Thomas Move Folder</span>
<span class="t" style="left:16.04px;top:444.00px;font-size:11.8px;font-weight:700;color:#757575;transform:scaleX(0.9275);;">Templates</span>
<span class="t" style="left:16.04px;top:468.20px;font-size:11.8px;font-weight:700;color:#757575;transform:scaleX(0.8905);;">Help Center</span>
<span class="t" style="left:16.04px;top:492.00px;font-size:11.8px;font-weight:700;color:#757575;transform:scaleX(0.8856);;">Community</span>
<span class="t" style="left:16.04px;top:516.20px;font-size:11.8px;font-weight:700;color:#757575;transform:scaleX(0.8582);;">What's new?</span>
<span class="t" style="left:34.08px;top:692.90px;font-size:11.8px;font-weight:700;color:#757575;transform:scaleX(0.8983);;">Trash</span>
<span class="t" style="left:441.08px;top:162.20px;font-size:11.8px;font-weight:700;color:#757575;transform:scaleX(0.8829);;">New</span>
<span class="t" style="left:406.20px;top:202.80px;font-size:13.4px;font-weight:700;color:#424242;transform:scaleX(0.9021);;">Reports</span>
<span class="t" style="left:992.50px;top:201.70px;font-size:11.8px;font-weight:700;color:#fff;transform:scaleX(0.8842);;">Share</span>
<span class="t" style="left:449.00px;top:233.80px;font-size:11.8px;font-weight:700;color:#424242;transform:scaleX(0.8835);;">Closed Won Report</span>
<span class="t" style="left:447.50px;top:265.80px;font-size:11.8px;font-weight:700;color:#424242;transform:scaleX(0.8754);;">Employee Directory</span>
<span class="t" style="left:447.50px;top:296.60px;font-size:11.8px;font-weight:700;color:#424242;transform:scaleX(0.9067);;">Thomas Move Test</span>
<span class="t" style="left:764.04px;top:232.70px;font-size:11.8px;font-weight:700;color:#424242;transform:scaleX(0.9112);;">Asset Management</span>
<span class="t" style="left:764.04px;top:265.80px;font-size:11.8px;font-weight:700;color:#424242;transform:scaleX(0.9053);;">Simple CRM</span>
<span class="t" style="left:441.08px;top:336.80px;font-size:11.8px;font-weight:700;color:#757575;transform:scaleX(0.8829);;">New</span>
<span class="t" style="left:406.20px;top:369.10px;font-size:13.4px;font-weight:700;color:#424242;transform:scaleX(0.8934);;">Dashboards</span>
<span class="t" style="left:992.50px;top:369.20px;font-size:11.8px;font-weight:700;color:#fff;transform:scaleX(0.8842);;">Share</span>
<span class="t" style="left:449.00px;top:400.20px;font-size:11.8px;font-weight:700;color:#424242;transform:scaleX(0.8830);;">Project Overview</span>
<span class="t" style="left:766.04px;top:400.20px;font-size:11.8px;font-weight:700;color:#424242;transform:scaleX(0.9159);;">Test</span>
<span class="t" style="left:441.08px;top:439.20px;font-size:11.8px;font-weight:700;color:#757575;transform:scaleX(0.8829);;">New</span>
<span class="t" style="left:371.70px;top:500.30px;font-size:14.8px;font-weight:700;color:#424242;transform:scaleX(0.9324);;">Move Test Workspace</span>
<span class="t" style="left:522.96px;top:501.20px;font-size:10.4px;font-weight:400;color:#777;transform:scaleX(0.9177);-webkit-text-stroke:0.3px;">FREE PLAN</span>
<span class="t" style="left:604.54px;top:500.40px;font-size:9.5px;font-weight:700;color:#fbe4ff;transform:scaleX(0.9332);;">Upgrade</span>
<span class="t" style="left:441.08px;top:554.30px;font-size:11.8px;font-weight:700;color:#757575;transform:scaleX(0.8829);;">New</span>
<span class="t" style="left:407.50px;top:595.00px;font-size:13.4px;font-weight:700;color:#424242;transform:scaleX(0.8959);;">Thomas Move Folder</span>
<span class="t" style="left:957.46px;top:595.20px;font-size:8.6px;font-weight:700;color:#fff;transform:scaleX(0.9321);;">OL</span>
<span class="t" style="left:992.50px;top:595.00px;font-size:11.8px;font-weight:700;color:#fff;transform:scaleX(0.8842);;">Share</span>
<span class="t" style="left:470.00px;top:626.50px;font-size:11.8px;font-weight:700;color:#a3a3a3;transform:scaleX(0.8812);;">Empty folder</span>
<span class="t" style="left:470.50px;top:649.40px;font-size:12px;font-weight:700;color:#3271d8;transform:scaleX(0.8712);;">Create a workbook</span>
<span class="t" style="left:568.54px;top:649.40px;font-size:12px;font-weight:400;color:#a0a0a0;transform:scaleX(0.9603);-webkit-text-stroke:0.3px;">to get started</span>
<span class="t" style="left:441.08px;top:684.60px;font-size:11.8px;font-weight:700;color:#757575;transform:scaleX(0.8829);;">New</span>
<div class="a" style="left:400px;top:134px;width:200px;height:12px;overflow:hidden">
<span class="t" style="left:47.5px;top:-10.6px;font-size:11.8px;font-weight:700;color:#424242;transform:scaleX(0.875)">Project Plan</span>
<svg style="left:9.4px;top:-5.6px" width="11.2" height="11.2" viewBox="0 0 11.2 11.2"><polygon points="5.6,0 7.1,3.6 11,3.900 8,6.400 9,10.300 5.600,8.200 2.200,10.300 3.200,6.400 0.200,3.900 4.100,3.600" fill="#e3e3e3"/></svg>
<svg style="left:29.7px;top:-7px" width="12" height="13" viewBox="0 0 12 13"><rect x="0.600" y="0.600" width="10.600" height="11.400" rx="1.400" fill="#e6fbfd" stroke="#3cc6d8" stroke-width="1.200"/><path d="M0.600,7.200 H11.200" stroke="#3cc6d8" stroke-width="1.100"/></svg>
</div>
</body>
</html>
